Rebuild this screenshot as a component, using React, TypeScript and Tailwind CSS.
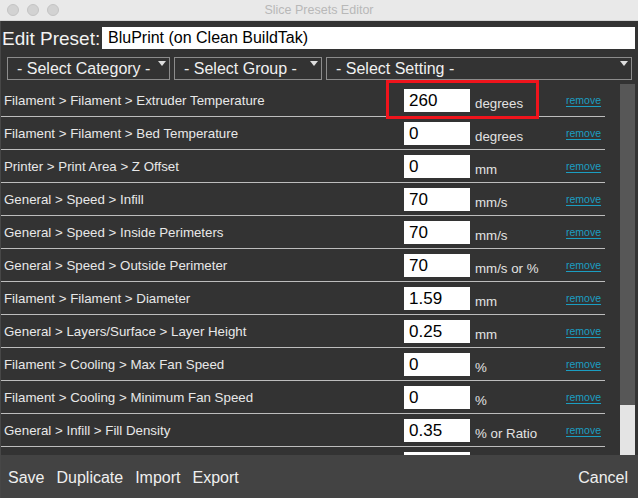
import React from "react";

const rows: [string, string, string][] = [
  ["Filament > Filament > Extruder Temperature", "260", "degrees"],
  ["Filament > Filament > Bed Temperature", "0", "degrees"],
  ["Printer > Print Area > Z Offset", "0", "mm"],
  ["General > Speed > Infill", "70", "mm/s"],
  ["General > Speed > Inside Perimeters", "70", "mm/s"],
  ["General > Speed > Outside Perimeter", "70", "mm/s or %"],
  ["Filament > Filament > Diameter", "1.59", "mm"],
  ["General > Layers/Surface > Layer Height", "0.25", "mm"],
  ["Filament > Cooling > Max Fan Speed", "0", "%"],
  ["Filament > Cooling > Minimum Fan Speed", "0", "%"],
  ["General > Infill > Fill Density", "0.35", "% or Ratio"],
  ["", "", ""],
];

function Select({ label, w }: { label: string; w: string }) {
  return (
    <div className={`relative h-[23px] border border-[#8c8c8c] ${w} flex items-center pl-[9px] text-[16px] text-[#f0f0f0] leading-none`}>
      {label}
      <div className="absolute right-[3px] top-[3px] w-0 h-0 border-l-[4px] border-r-[4px] border-t-[5px] border-l-transparent border-r-transparent border-t-[#dedede]" />
    </div>
  );
}

export default function App() {
  return (
    <div
      className="w-[638px] h-[498px] flex flex-col overflow-hidden bg-[#333333]"
      style={{ fontFamily: '"Liberation Sans", Arial, sans-serif' }}
    >
      {/* title bar */}
      <div className="relative h-[21px] bg-[#e9e9e9] border-b border-[#d4d4d4] flex items-center shrink-0">
        <div className="flex gap-[8px] pl-[7px]">
          <div className="w-[12px] h-[12px] rounded-full bg-[#d2d2d2] border border-[#c4c4c4]" />
          <div className="w-[12px] h-[12px] rounded-full bg-[#d2d2d2] border border-[#c4c4c4]" />
          <div className="w-[12px] h-[12px] rounded-full bg-[#d2d2d2] border border-[#c4c4c4]" />
        </div>
        <div className="absolute inset-0 flex items-center justify-center text-[12.5px] text-[#b8b8b8]">
          Slice Presets Editor
        </div>
      </div>

      <div className="flex-1 flex flex-col border-l border-[#474747]">
        {/* edit preset */}
        <div className="flex items-center mt-[6px] h-[22px]">
          <div className="text-[19px] text-[#f2f2f2] pl-[1px] w-[101px] leading-none">Edit Preset:</div>
          <div className="w-[533px] h-[22px] bg-white flex items-center pl-[6px] text-[16px] text-black">
            BluPrint (on Clean BuildTak)
          </div>
        </div>

        {/* selects */}
        <div className="flex mt-[8px] pl-[6px] gap-[4px]">
          <Select label="- Select Category -" w="w-[163px]" />
          <Select label="- Select Group -" w="w-[148px]" />
          <Select label="- Select Setting -" w="w-[306px]" />
        </div>

        {/* list */}
        <div className="relative mt-[4px] h-[371px] flex">
          <div className="w-[604px] h-[371px] overflow-hidden">
            {rows.map(([label, value, unit], i) => (
              <div key={i} className="flex h-[33px] border-b border-[#bdbdbd]">
                <div className="w-[403px] shrink-0 pl-[3px] pt-[1px] leading-[32px] text-[13.3px] text-[#e8e8e8] whitespace-nowrap">
                  {label}
                </div>
                <div className="w-[66px] shrink-0 h-[23px] mt-[5px] bg-white pl-[5px] flex items-center text-[17px] text-black leading-none">
                  {value}
                </div>
                {label !== "" && (
                  <>
                    <div className="w-[96px] shrink-0 pl-[5px] mt-[12px] leading-[16px] text-[13.3px] text-[#e2e2e2] whitespace-nowrap">
                      {unit}
                    </div>
                    <div className="mt-[10px] leading-[13px] text-[10.5px] text-[#1b9ec2] underline underline-offset-[2px]">
                      remove
                    </div>
                  </>
                )}
              </div>
            ))}
          </div>
          <div className="absolute left-[385px] top-[-4px] w-[153px] h-[39px] border-[3px] border-[#f0141c]" />
          <div className="ml-[15px] w-[15px] h-[371px] flex flex-col">
            <div className="flex-1 bg-[#575757]" />
            <div className="h-[50px] bg-[#e4e4e4]" />
          </div>
        </div>

        {/* footer */}
        <div className="flex-1 bg-[#434343] flex items-center justify-between pt-[3px] pl-[7px] pr-[10px] text-[16px] text-[#efefef]">
          <div className="flex gap-[12px]">
            <span>Save</span>
            <span>Duplicate</span>
            <span>Import</span>
            <span>Export</span>
          </div>
          <span>Cancel</span>
        </div>
      </div>
    </div>
  );
}
